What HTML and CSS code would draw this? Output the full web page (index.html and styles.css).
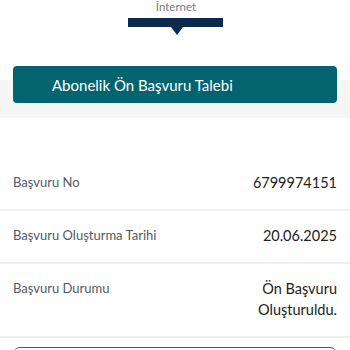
FILE: index.html
```html
<!DOCTYPE html>
<html lang="tr">
<head>
<meta charset="utf-8">
<link rel="stylesheet" href="styles.css">
</head>
<body>
<div class="tabs">
  <div class="tab-label">İnternet</div>
  <div class="tab-indicator"><span class="tab-arrow"></span></div>
</div>
<div class="title-band">
  <div class="title-btn">Abonelik Ön Başvuru Talebi</div>
</div>
<div class="details">
  <div class="row">
    <div class="label">Başvuru No</div>
    <div class="value">6799974151</div>
  </div>
  <div class="row">
    <div class="label">Başvuru Oluşturma Tarihi</div>
    <div class="value">20.06.2025</div>
  </div>
  <div class="row">
    <div class="label">Başvuru Durumu</div>
    <div class="value">Ön Başvuru Oluşturuldu.</div>
  </div>
  <div class="next-box"></div>
</div>
</body>
</html>
```
FILE: styles.css
```css
html, body {
  margin: 0;
  padding: 0;
  background: #ffffff;
  font-family: "Lato", "Noto Sans", sans-serif;
}
.tabs {
  display: flex;
  flex-direction: column;
  align-items: center;
  height: 66px;
}
.tab-label {
  font-size: 11.5px;
  line-height: 14px;
  color: #7a7a7a;
  padding-left: 2px;
}
.tab-indicator {
  position: relative;
  margin-top: 4px;
  width: 95px;
  height: 9px;
  background: #0c2a4e;
  margin-left: 1px;
}
.tab-arrow {
  position: absolute;
  left: 43px;
  top: 9px;
  width: 0;
  height: 0;
  border-left: 6px solid transparent;
  border-right: 6px solid transparent;
  border-top: 8px solid #0c2a4e;
}
.title-band {
  padding: 0 13px 15px;
  background: linear-gradient(to bottom, #ffffff 0, #ffffff 14px, #f5f5f5 14px);
}
.title-btn {
  height: 37px;
  background: #03646f;
  border-radius: 4px;
  color: #ffffff;
  font-size: 15px;
  display: flex;
  align-items: center;
  padding-left: 39px;
}
.details {
  padding-top: 40px;
}
.row {
  display: flex;
  justify-content: space-between;
  align-items: flex-start;
  padding: 14px 13px 16px;
  border-bottom: 2px solid #f0f0f0;
  line-height: 21px;
}
.label {
  font-size: 13px;
  color: #555a60;
}
.value {
  font-size: 14.5px;
  color: #222222;
  text-align: right;
  max-width: 140px;
}
.next-box {
  margin: 9px 13px 0;
  height: 30px;
  border: 1.5px solid #4b5663;
  border-radius: 7px;
}
```
